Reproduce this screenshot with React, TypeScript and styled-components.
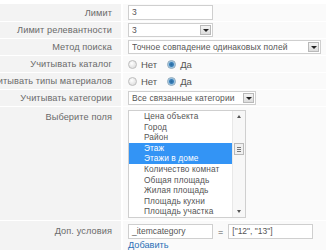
import React from 'react';
import styled, { createGlobalStyle } from 'styled-components';

const GlobalStyle = createGlobalStyle`
    html, body {
        margin: 0;
        padding: 0;
        background: #fff;
        overflow: hidden;
    }
    body {
        font-family: "Liberation Sans", Arial, sans-serif;
    }
`;

const Form = styled.div`
    display: grid;
    grid-template-columns: 121px 1fr;
    column-gap: 2px;
    row-gap: 1px;
    padding-top: 4px;
    width: 326px;
    background: #fff;
`;

const Label = styled.div<{ $top?: number }>`
    display: flex;
    justify-content: flex-end;
    align-items: ${(p) => (p.$top !== undefined ? 'flex-start' : 'center')};
    padding: ${(p) => (p.$top !== undefined ? `${p.$top}px 9px 0 0` : '0 9px 0 0')};
    min-height: 16px;
    background: #f3f3f3;
    color: #6a6a6a;
    font-size: 9.2px;
    letter-spacing: 0.1px;
    white-space: nowrap;
    overflow: hidden;
`;

const Field = styled.div<{ $pad?: string }>`
    display: flex;
    flex-direction: column;
    justify-content: center;
    padding: ${(p) => p.$pad || '1px 5px'};
    min-height: 16px;
    background: #fafafa;
    box-sizing: border-box;
`;

const Line = styled.div`
    display: flex;
    align-items: center;
`;

const TextInput = styled.div<{ $w: number }>`
    width: ${(p) => p.$w}px;
    height: 15px;
    box-sizing: border-box;
    border: 1px solid #cfcfcf;
    background: #fff;
    padding: 0 3px;
    font-size: 8.5px;
    line-height: 13px;
    color: #555;
    white-space: nowrap;
    overflow: hidden;
`;

const SelectBox = styled.div<{ $w: number }>`
    display: flex;
    align-items: center;
    width: ${(p) => p.$w}px;
    height: 14px;
    box-sizing: border-box;
    border: 1px solid #cfcfcf;
    background: #fff;
    padding-left: 3px;
    font-size: 8.5px;
    letter-spacing: 0.1px;
    color: #555;
`;

const SelectText = styled.span`
    flex: 1;
    white-space: nowrap;
    overflow: hidden;
`;

const DropButton = styled.span`
    display: flex;
    align-items: center;
    justify-content: center;
    width: 11px;
    height: 10px;
    margin-right: 1px;
    border: 1px solid #b9b9b9;
    background: linear-gradient(#f4f4f4, #dcdcdc);
    box-sizing: border-box;
    &::after {
        content: '';
        border-left: 3px solid transparent;
        border-right: 3px solid transparent;
        border-top: 3px solid #222;
    }
`;

const RadioGroup = styled.div`
    display: flex;
    align-items: center;
    font-size: 9.5px;
    color: #555;
`;

const RadioLabel = styled.label`
    display: flex;
    align-items: center;
    gap: 4px;
    margin-right: 10px;
`;

const RadioDot = styled.span<{ $on?: boolean }>`
    width: 9px;
    height: 9px;
    border-radius: 50%;
    box-sizing: border-box;
    border: 1px solid ${(p) => (p.$on ? '#8aa7bb' : '#bdbdbd')};
    background: ${(p) =>
        p.$on
            ? 'radial-gradient(circle, #2a6aa0 0, #3a80b8 2px, #9cc4e2 3px, #e6eef4 4px)'
            : 'radial-gradient(circle at 40% 35%, #fff 0, #e4e4e4 4px)'};
`;

const ListBox = styled.div`
    display: flex;
    width: 118px;
    height: 108px;
    box-sizing: border-box;
    border: 1px solid #cfcfcf;
    background: #fff;
`;

const Options = styled.div`
    flex: 1;
    overflow: hidden;
`;

const Option = styled.div<{ $selected?: boolean }>`
    height: 10.6px;
    line-height: 10.6px;
    padding-left: 15px;
    font-size: 8.3px;
    letter-spacing: 0.1px;
    white-space: nowrap;
    color: ${(p) => (p.$selected ? '#fff' : '#555')};
    background: ${(p) => (p.$selected ? '#3394f5' : 'transparent')};
`;

const ScrollBar = styled.div`
    display: flex;
    flex-direction: column;
    align-items: center;
    width: 12px;
    background: #f7f7f7;
    border-left: 1px solid #e8e8e8;
`;

const Arrow = styled.span<{ $down?: boolean }>`
    margin: 4px 0;
    border-left: 2.5px solid transparent;
    border-right: 2.5px solid transparent;
    ${(p) => (p.$down ? 'border-top: 3px solid #555;' : 'border-bottom: 3px solid #555;')}
`;

const Thumb = styled.span`
    display: flex;
    flex-direction: column;
    justify-content: center;
    gap: 1px;
    width: 10px;
    height: 12px;
    margin-top: 21px;
    box-sizing: border-box;
    border: 1px solid #b9b9b9;
    background: #f0f0f0;
    padding: 0 2px;
    & > i {
        display: block;
        height: 1px;
        background: #777;
    }
`;

const Spacer = styled.span`
    flex: 1;
`;

const Equals = styled.span`
    margin: 0 5px;
    font-size: 9px;
    color: #555;
`;

const AddLink = styled.a`
    margin-top: 1px;
    font-size: 9.2px;
    color: #2a6fb6;
    text-decoration: none;
`;

const fields = [
    'Цена объекта',
    'Город',
    'Район',
    'Этаж',
    'Этажи в доме',
    'Количество комнат',
    'Общая площадь',
    'Жилая площадь',
    'Площадь кухни',
    'Площадь участка',
];
const selected = ['Этаж', 'Этажи в доме'];

const Radios = ({ yes }: { yes: boolean }) => (
    <RadioGroup>
        <RadioLabel>
            <RadioDot $on={!yes} />
            Нет
        </RadioLabel>
        <RadioLabel>
            <RadioDot $on={yes} />
            Да
        </RadioLabel>
    </RadioGroup>
);

const App = () => {
    return (
        <>
            <GlobalStyle />
            <Form>
                <Label>Лимит</Label>
                <Field>
                    <TextInput $w={85}>3</TextInput>
                </Field>

                <Label>Лимит релевантности</Label>
                <Field>
                    <SelectBox $w={85}>
                        <SelectText>3</SelectText>
                        <DropButton />
                    </SelectBox>
                </Field>

                <Label>Метод поиска</Label>
                <Field>
                    <SelectBox $w={193}>
                        <SelectText>Точное совпадение одинаковых полей</SelectText>
                        <DropButton />
                    </SelectBox>
                </Field>

                <Label>Учитывать каталог</Label>
                <Field>
                    <Radios yes />
                </Field>

                <Label>Учитывать типы материалов</Label>
                <Field>
                    <Radios yes />
                </Field>

                <Label>Учитывать категории</Label>
                <Field>
                    <SelectBox $w={128}>
                        <SelectText>Все связанные категории</SelectText>
                        <DropButton />
                    </SelectBox>
                </Field>

                <Label $top={5}>Выберите поля</Label>
                <Field $pad="3px 5px 2px">
                    <ListBox>
                        <Options>
                            {fields.map((f) => (
                                <Option key={f} $selected={selected.includes(f)}>
                                    {f}
                                </Option>
                            ))}
                        </Options>
                        <ScrollBar>
                            <Arrow />
                            <Thumb>
                                <i />
                                <i />
                                <i />
                            </Thumb>
                            <Spacer />
                            <Arrow $down />
                        </ScrollBar>
                    </ListBox>
                </Field>

                <Label $top={5}>Доп. условия</Label>
                <Field $pad="3px 5px 8px">
                    <Line>
                        <TextInput $w={85}>_itemcategory</TextInput>
                        <Equals>=</Equals>
                        <TextInput $w={85}>["12", "13"]</TextInput>
                    </Line>
                    <AddLink href="#">Добавить</AddLink>
                </Field>
            </Form>
        </>
    );
};

export default App;
